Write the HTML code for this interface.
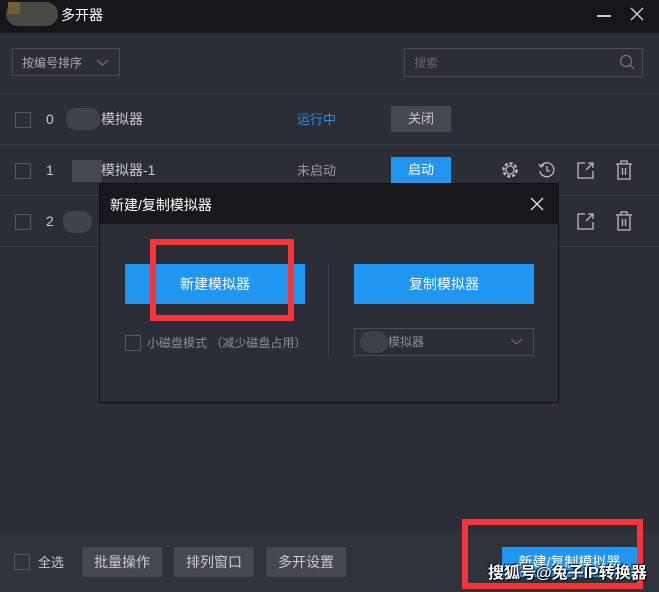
<!DOCTYPE html>
<html><head><meta charset="utf-8"><style>
*{margin:0;padding:0;box-sizing:border-box}
body{width:659px;height:592px;overflow:hidden;background:#2b2e36;font-family:"Liberation Sans","Noto Sans CJK SC",sans-serif;color:#c8cad0;font-size:13px;position:relative}
.a{position:absolute;line-height:1}
.cb{position:absolute;width:16px;height:16px;border:1px solid #555963}
.btn{position:absolute;background:#454851;color:#c8cad0;text-align:center;font-size:14px}
.blue{background:#2196f0;color:#fff}
.line{position:absolute;left:0;width:659px;height:1px;background:#3a3d45}
</style></head><body>
<div class="a" style="left:0;top:0;width:659px;height:33px;background:#16171b"></div>
<div class="a" style="left:6px;top:2px;width:52px;height:24px;border-radius:12px;background:#4a4a44"></div>
<div class="a" style="left:8px;top:2px;width:12px;height:12px;background:#6f6232"></div>
<div class="a" style="left:61px;top:8px;color:#fff;font-size:14px">多开器</div>
<div class="a" style="left:597px;top:15px;width:14px;height:1.5px;background:#ccc"></div>
<svg class="a" style="left:630px;top:7px" width="14" height="14"><path d="M1 1L13 13M13 1L1 13" stroke="#ccc" stroke-width="1.4"/></svg>

<div class="a" style="left:12px;top:48px;width:108px;height:28px;border:1px solid #4a4d55;padding:8px 0 0 9px;color:#aaa;font-size:12px">按编号排序</div>
<svg class="a" style="left:97px;top:60px" width="11" height="6"><path d="M0 0L5.5 5L11 0" fill="none" stroke="#888"/></svg>
<div class="a" style="left:404px;top:48px;width:239px;height:29px;border:1px solid #4a4d55;padding:8px 0 0 9px;color:#666;font-size:12px">搜索</div>
<svg class="a" style="left:619px;top:54px" width="16" height="16"><circle cx="7" cy="7" r="5.5" fill="none" stroke="#777" stroke-width="1.2"/><path d="M11 11L15 15" stroke="#777" stroke-width="1.2"/></svg>
<div class="line" style="top:93px"></div>

<div class="cb" style="left:15px;top:112px"></div><div class="a" style="left:46px;top:112px;font-size:14px">0</div>
<div class="a" style="left:66px;top:108px;width:34px;height:22px;border-radius:10px;background:#40434a"></div>
<div class="a" style="left:101px;top:112px;font-size:14px">模拟器</div>
<div class="a" style="left:297px;top:113px;color:#2f8ee0">运行中</div>
<div class="btn" style="left:391px;top:106px;width:60px;height:26px;line-height:26px;font-size:13px">关闭</div>
<div class="line" style="top:144px"></div>

<div class="cb" style="left:15px;top:163px"></div><div class="a" style="left:46px;top:163px;font-size:14px">1</div>
<div class="a" style="left:72px;top:160px;width:30px;height:22px;background:#45484f"></div>
<div class="a" style="left:101px;top:163px;font-size:14px">模拟器-1</div>
<div class="a" style="left:297px;top:164px;color:#999">未启动</div>
<div class="btn blue" style="left:391px;top:157px;width:60px;height:26px;line-height:26px;font-size:13px">启动</div>
<svg class="a" style="left:500px;top:160px" width="20" height="20"><circle cx="10" cy="10" r="6.5" fill="none" stroke="#bbb" stroke-width="2.5" stroke-dasharray="3 2"/><circle cx="10" cy="10" r="4" fill="none" stroke="#bbb" stroke-width="1.3"/></svg>
<svg class="a" style="left:537px;top:160px" width="20" height="20"><path d="M4 6A7 7 0 1 1 3 11" fill="none" stroke="#bbb" stroke-width="1.3"/><path d="M2 4L4 7L7 5" fill="none" stroke="#bbb" stroke-width="1.3"/><path d="M10 6V11H13" fill="none" stroke="#bbb" stroke-width="1.3"/></svg>
<svg class="a" style="left:576px;top:160px" width="20" height="20"><path d="M9 3H2V18H17V11" fill="none" stroke="#bbb" stroke-width="1.3"/><path d="M10 10L17 3M12 3H17V8" fill="none" stroke="#bbb" stroke-width="1.3"/></svg>
<svg class="a" style="left:614px;top:160px" width="20" height="20"><path d="M2 4H18M7 4V1H13V4M4 4V19H16V4M8.5 8V15M11.5 8V15" fill="none" stroke="#bbb" stroke-width="1.3"/></svg>
<div class="line" style="top:195px"></div>

<div class="cb" style="left:15px;top:214px"></div><div class="a" style="left:46px;top:214px;font-size:14px">2</div>
<div class="a" style="left:63px;top:211px;width:29px;height:22px;border-radius:10px;background:#40434a"></div>
<svg class="a" style="left:576px;top:211px" width="20" height="20"><path d="M9 3H2V18H17V11" fill="none" stroke="#bbb" stroke-width="1.3"/><path d="M10 10L17 3M12 3H17V8" fill="none" stroke="#bbb" stroke-width="1.3"/></svg>
<svg class="a" style="left:614px;top:211px" width="20" height="20"><path d="M2 4H18M7 4V1H13V4M4 4V19H16V4M8.5 8V15M11.5 8V15" fill="none" stroke="#bbb" stroke-width="1.3"/></svg>
<div class="line" style="top:246px"></div>

<!-- dialog -->
<div class="a" style="left:99px;top:183px;width:460px;height:220px;background:#2b2e36;border:1px solid #0e0f12"></div>
<div class="a" style="left:100px;top:184px;width:458px;height:40px;background:#18191d"></div>
<div class="a" style="left:110px;top:198px;color:#fff;font-size:14px">新建/复制模拟器</div>
<svg class="a" style="left:530px;top:197px" width="14" height="14"><path d="M1 1L13 13M13 1L1 13" stroke="#ddd" stroke-width="1.4"/></svg>
<div class="btn blue" style="left:125px;top:264px;width:180px;height:40px;line-height:40px;font-size:14px">新建模拟器</div>
<div class="btn blue" style="left:354px;top:264px;width:180px;height:40px;line-height:40px;font-size:14px">复制模拟器</div>
<div class="a" style="left:328px;top:264px;width:1px;height:94px;background:#3d4048"></div>
<div class="cb" style="left:125px;top:335px"></div>
<div class="a" style="left:147px;top:337px;font-size:12px;color:#8a8d94">小磁盘模式 （减少磁盘占用）</div>
<div class="a" style="left:354px;top:328px;width:180px;height:28px;border:1px solid #4a4d55"></div>
<div class="a" style="left:360px;top:331px;width:28px;height:22px;border-radius:11px;background:#3e4148"></div>
<div class="a" style="left:388px;top:336px;font-size:12px;color:#8a8d94">模拟器</div>
<svg class="a" style="left:511px;top:339px" width="11" height="6"><path d="M0 0L5.5 5L11 0" fill="none" stroke="#777"/></svg>
<div class="a" style="left:150px;top:239px;width:144px;height:82px;border:6px solid #f7343a"></div>

<!-- bottom -->
<div class="a" style="left:0;top:532px;width:659px;height:60px;background:#30333b"></div>
<div class="cb" style="left:14px;top:554px"></div>
<div class="a" style="left:38px;top:556px;font-size:13px">全选</div>
<div class="btn" style="left:82px;top:547px;width:80px;height:30px;line-height:30px">批量操作</div>
<div class="btn" style="left:174px;top:547px;width:80px;height:30px;line-height:30px">排列窗口</div>
<div class="btn" style="left:266px;top:547px;width:80px;height:30px;line-height:30px">多开设置</div>
<div class="btn blue" style="left:502px;top:547px;width:135px;height:30px;line-height:30px">新建/复制模拟器</div>
<div class="a" style="left:462px;top:519px;width:181px;height:70px;border:6px solid #f7343a"></div>
<div class="a" style="left:488px;top:566px;font-size:16px;font-weight:bold;color:#fff;text-shadow:1px 1px 1px #000,-1px -1px 1px #000">搜狐号@兔子IP转换器</div>
</body></html>
